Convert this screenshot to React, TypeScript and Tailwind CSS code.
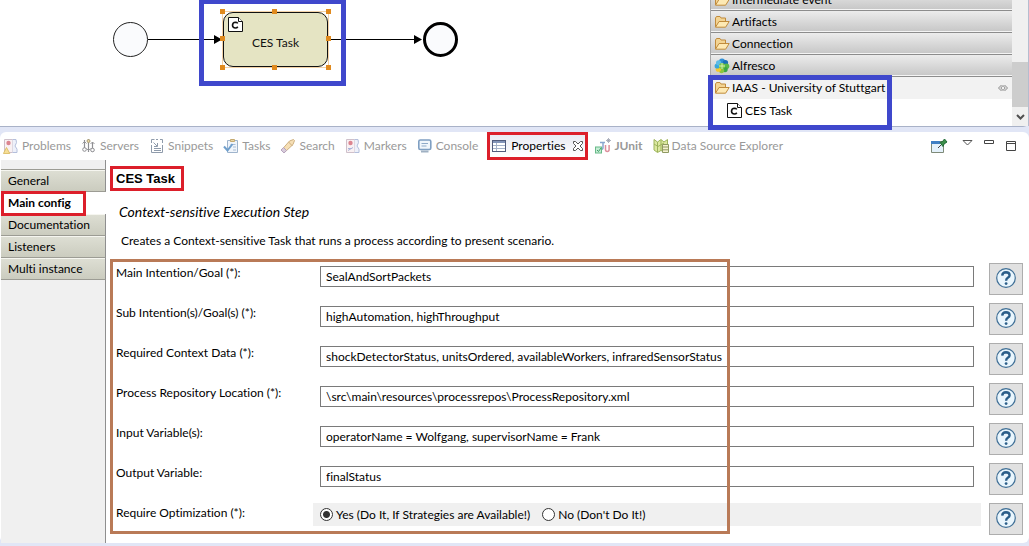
import type { ReactNode } from 'react';

const Folder = () => (
  <svg width="16" height="16" viewBox="0 0 16 16" className="shrink-0">
    <path d="M1.500 13V4l1-1.500h3.500l1 1.500h4.500V7" fill="#f3d493" stroke="#c08b3c" />
    <path d="M1.500 13.200L5 7.500h10.200l-3.600 5.700z" fill="#fde9b4" stroke="#c08b3c" strokeLinejoin="round" />
  </svg>
);

const Alfresco = () => (
  <svg width="16" height="16" viewBox="0 0 16 16" className="shrink-0">
    <circle cx="8" cy="3.600" r="3" fill="#2f8fd6" />
    <circle cx="11.400" cy="4.800" r="2.700" fill="#1c6fb8" />
    <circle cx="12.500" cy="8.200" r="2.800" fill="#58b947" />
    <circle cx="11" cy="11.600" r="2.700" fill="#3aa648" />
    <circle cx="7.600" cy="12.600" r="2.600" fill="#8ac53e" />
    <circle cx="4.300" cy="11.200" r="2.600" fill="#f5c82a" />
    <circle cx="3.200" cy="8" r="2.600" fill="#38a7dd" />
    <circle cx="4.600" cy="4.800" r="2.600" fill="#5cbce6" />
    <circle cx="8" cy="8" r="3" fill="#7cc84a" />
    <path d="M8 5v6M5 8h6" stroke="#e6f6c8" strokeWidth=".8" />
  </svg>
);

const ServiceIcon = () => (
  <svg width="17" height="17" viewBox="0 0 17 17" className="shrink-0">
    <path d="M1.500 1.500h10l4 4v10h-14z" fill="#fff" stroke="#111" />
    <path d="M11.500 1.500v4h4" fill="#fff" stroke="#111" />
    <path d="M10.800 7.400Q10 6.300 8.500 6.300 5.600 6.500 5.500 9.200 5.600 11.900 8.500 12q1.500 0 2.300-1.200" fill="none" stroke="#111" strokeWidth="1.600" />
  </svg>
);

const tabIcon = (body: ReactNode) => (
  <svg width="16" height="16" viewBox="0 0 16 16" fill="none" className="shrink-0">
    {body}
  </svg>
);

const markerBody = (
  <>
    <path d="M1.500 1.500h8v13h-8z" fill="#f9f1f3" stroke="#cfc0ca" />
    <path d="M9.500 1.500h3.500q1.500 3-1 6.500 3 3 2 6.500H9.500" fill="#eef1fa" stroke="#b4bfdc" />
    <circle cx="5.500" cy="5" r="2.200" fill="#dc8590" />
  </>
);

const icons = {
  problems: tabIcon(
    <>
      {markerBody}
      <path d="M3.500 9.500l3.300 6H.4z" fill="#f6df96" stroke="#d9b75a" strokeWidth=".8" />
    </>,
  ),
  servers: tabIcon(
    <>
      <path d="M3.500 2v9M7.500 1v13M11.500 4v10" stroke="#8e8e92" strokeWidth="1.200" />
      <path d="M1.500 5.500l2-2 2 2M5.500 10.500l2 2 2-2M9.500 6l2-2 2 2" stroke="#98989c" />
      <circle cx="3.500" cy="11.500" r="1.800" fill="#fff" stroke="#8e8e92" />
      <circle cx="7.500" cy="3" r="1.500" fill="#e9d6a0" stroke="#a89c78" />
      <circle cx="11.500" cy="12" r="1.800" fill="#fff" stroke="#8e8e92" />
    </>,
  ),
  snippets: tabIcon(
    <>
      <path d="M2.500 5V1.500h3M7 1.500h2M11 1.500h2.500V5M2.500 7v7.500h11V7" stroke="#8f9bab" />
      <path d="M4.500 4.500l3.500 3.500M8.500 5v3.500H5M5 10.500h7M5 12.500h7" stroke="#8f9bab" />
    </>,
  ),
  tasks: tabIcon(
    <>
      <path d="M4.500 2.500h10v12h-10z" fill="#f0f5fb" stroke="#9fb4cc" />
      <path d="M7.500 1.500h4v2h-4z" fill="#e8d6a8" stroke="#c5aa70" />
      <path d="M7.500 6.500h5M10 9h3M10 12h3" stroke="#a9bdd5" />
      <path d="M1 8.500l3.500 4L9.500 6" stroke="#6f9fcc" strokeWidth="2" />
    </>,
  ),
  search: tabIcon(
    <>
      <path d="M2 11.500L9.500 3l4-1.500 1 1-1.500 4L5 14z" fill="#f6dfb5" stroke="#ceb080" />
      <path d="M8.500 4l4 4" stroke="#ceb080" />
      <path d="M1 12l3 3 2.500-2.500-3-3z" fill="#d8ccdb" stroke="#b7a4bd" />
    </>,
  ),
  markers: tabIcon(
    <>
      {markerBody}
      <path d="M3 12.500l5-3M3 10.500h4" stroke="#a9b4da" />
    </>,
  ),
  console: tabIcon(
    <>
      <rect x="1.800" y="2" width="12" height="9.500" rx="1.500" fill="#f1f6fb" stroke="#7f9fc2" strokeWidth="1.600" />
      <path d="M4.500 5.500h6.500M4.500 8h5" stroke="#8faac8" />
      <path d="M4 13.500h7.500" stroke="#9fb0c2" strokeWidth="2" />
    </>,
  ),
  properties: tabIcon(
    <>
      <rect x="1.500" y="2.500" width="13" height="11" fill="#fff" stroke="#525c7c" />
      <path d="M2 4h12" stroke="#8294b8" strokeWidth="2" />
      <path d="M5.500 5v8M2 7.500h12M2 10.500h12" stroke="#a5b3ca" />
    </>,
  ),
  junit: tabIcon(
    <>
      <path d="M5 4.500h5M8 4.500v5q0 2-2 2" stroke="#88a7cf" strokeWidth="1.500" />
      <path d="M10.500 7v4.500q0 2 1.800 2t1.800-2V7" stroke="#dc8f9c" strokeWidth="1.500" />
      <path d="M13.500 0v5M11 2.500h5M12 1l3 3M15 1l-3 3" stroke="#9a9fae" strokeWidth=".8" />
      <rect x=".5" y="9" width="6" height="6" fill="#c5ecd5" stroke="#68ba88" />
      <path d="M2 12l1.500 1.500L6 10" stroke="#3fa066" />
    </>,
  ),
  data: tabIcon(
    <>
      <path d="M1 1.500l3.500 2.500L8 1.500 11 4l3.500-2.500V13L11 14l-3-1.500-3.500 2L1 12z" fill="#dce8a0" stroke="#9db45b" />
      <path d="M4.500 4v10M8 2v10.500M1 6l4 2.500L11 5" stroke="#9db45b" />
      <path d="M9.500 6.500h6v8h-6zM9.500 9h6M9.500 11.800h6" fill="#f4f1cf" stroke="#8f9a62" />
    </>,
  ),
};

const tabs: { name: string; icon: ReactNode; bold?: boolean }[] = [
  { name: 'Problems', icon: icons.problems },
  { name: 'Servers', icon: icons.servers },
  { name: 'Snippets', icon: icons.snippets },
  { name: 'Tasks', icon: icons.tasks },
  { name: 'Search', icon: icons.search },
  { name: 'Markers', icon: icons.markers },
  { name: 'Console', icon: icons.console },
  { name: 'Properties', icon: icons.properties },
  { name: 'JUnit', icon: icons.junit, bold: true },
  { name: 'Data Source Explorer', icon: icons.data },
];

const fields = [
  ['Main Intention/Goal (*):', 'SealAndSortPackets'],
  ['Sub Intention(s)/Goal(s) (*):', 'highAutomation, highThroughput'],
  ['Required Context Data (*):', 'shockDetectorStatus, unitsOrdered, availableWorkers, infraredSensorStatus'],
  ['Process Repository Location (*):', '\\src\\main\\resources\\processrepos\\ProcessRepository.xml'],
  ['Input Variable(s):', 'operatorName = Wolfgang, supervisorName = Frank'],
  ['Output Variable:', 'finalStatus'],
];

const handles = [
  '-left-[3px] -top-[3px]',
  'left-[49px] -top-[3px]',
  '-right-[3px] -top-[3px]',
  '-left-[3px] top-[24px]',
  '-right-[3px] top-[24px]',
  '-left-[3px] -bottom-[3px]',
  'left-[49px] -bottom-[3px]',
  '-right-[3px] -bottom-[3px]',
];

function Diagram() {
  return (
    <div className="relative min-w-0 flex-1 bg-white">
      <svg width="470" height="90" viewBox="0 0 470 90" className="absolute left-0 top-0">
        <circle cx="130.500" cy="39.500" r="17" fill="#fafbfd" stroke="#222" />
        <path d="M148 39.500h68M328 39.500h90" stroke="#000" />
        <path d="M214 35l8 4.500-8 4.500zM414 35l8 4.500-8 4.500z" fill="#000" />
        <circle cx="440.500" cy="39.500" r="16" fill="#fafbfd" stroke="#000" strokeWidth="3" />
      </svg>
      <div className="absolute left-[199px] -top-px h-[87px] w-[147px] border-5 border-[#3f48cc]" />
      <div className="absolute left-[223px] top-[12px] h-[55px] w-[105px] outline outline-[#f3d3a8]">
        <div className="flex h-full items-center justify-center rounded-[10px] border border-[#111] bg-[#e5e4c3] pt-[7px] text-[#111]">
          CES Task
        </div>
        <div className="absolute left-[4px] top-[4px]">
          <ServiceIcon />
        </div>
        {handles.map((place) => (
          <span key={place} className={`absolute size-[5px] bg-[#e08a1e] ${place}`} />
        ))}
      </div>
    </div>
  );
}

function PaletteRow({ icon, name }: { icon: ReactNode; name: string }) {
  return (
    <button className="flex h-[22px] w-full shrink-0 items-center gap-[2px] border-b border-[#8c8c8c] bg-gradient-to-b from-[#ececec] to-[#c6c6c6] pl-[3px] text-left shadow-[inset_0_-1px_0_#f4f4f4]">
      {icon}
      {name}
    </button>
  );
}

function Palette() {
  return (
    <div className="relative flex w-[319px] shrink-0 border-r border-[#b5bccf]">
      <div className="flex flex-1 flex-col justify-end overflow-hidden border-l border-[#a8a8a8]">
        <PaletteRow icon={<Folder />} name="Intermediate event" />
        <PaletteRow icon={<Folder />} name="Artifacts" />
        <PaletteRow icon={<Folder />} name="Connection" />
        <PaletteRow icon={<Alfresco />} name="Alfresco" />
        <button className="flex h-[22px] shrink-0 items-center gap-[2px] bg-[#f2f2f2] pl-[3px] pr-[3px] text-left">
          <Folder />
          <span className="flex-1">IAAS - University of Stuttgart</span>
          <svg width="12" height="10" viewBox="0 0 12 10" fill="none" stroke="#888">
            <path d="M4.500 2L1.500 5l3 3M7.500 2l3 3-3 3M6 2.500L3.800 5 6 7.500 8.200 5z" />
          </svg>
        </button>
        <button className="flex h-[27px] shrink-0 items-center gap-[2px] bg-white pb-[4px] pl-[15px] text-left">
          <ServiceIcon />
          CES Task
        </button>
      </div>
      <div className="flex w-[16px] flex-col bg-[#f0f0f0]">
        <div className="mt-[62px] h-[45px] bg-[#cdcdcd]" />
        <div className="flex flex-1 items-center justify-center">
          <svg width="9" height="6" viewBox="0 0 9 6" fill="none" stroke="#505050" strokeWidth="2">
            <path d="M1 1l3.500 3.500L8 1" />
          </svg>
        </div>
      </div>
      <div className="absolute -left-[2px] top-[75px] z-10 h-[55px] w-[184px] border-5 border-[#3f48cc]" />
    </div>
  );
}

function TabBar() {
  return (
    <div className="flex h-[28px] items-center pl-[3px] pr-[12px] text-[#999]">
      <div role="tablist" className="flex min-w-0 flex-1 items-center gap-[10px] whitespace-nowrap">
        {tabs.map((tab) =>
          tab.name === 'Properties' ? (
            <div key={tab.name} className="-mr-[3px] -ml-px flex h-[28px] items-center gap-[7px] border-3 border-[#dc1f2a] bg-gradient-to-b from-[#e9ebf3] to-white px-px">
              <button role="tab" aria-selected="true" className="flex items-center gap-[4px] text-black">
                {tab.icon}
                {tab.name}
              </button>
              <button aria-label="Close">
                <svg width="12" height="12" viewBox="0 0 12 12" fill="#fff" stroke="#555">
                  <path d="M1.500 1.500h2L6 4l2.500-2.500h2v2L8 6l2.500 2.500v2h-2L6 8l-2.500 2.500h-2v-2L4 6 1.500 3.500z" />
                </svg>
              </button>
            </div>
          ) : (
            <button key={tab.name} role="tab" aria-selected="false" className="flex items-center gap-[3px]">
              {tab.icon}
              <span className={tab.bold ? 'font-bold' : ''}>{tab.name}</span>
            </button>
          ),
        )}
      </div>
      <div className="flex items-center gap-[11px]">
        <button aria-label="Pin view" className="mr-[3px]">
          <svg width="18" height="16" viewBox="0 0 18 16">
            <path d="M1.500 3.500h12v11h-12z" fill="#e4f1fb" stroke="#7e8a78" />
            <path d="M1 3h9v3H1z" fill="#3f7fc4" />
            <path d="M8 10l4-4" stroke="#444" />
            <path d="M10 4.500l3 4 1-2.500 3-2-2.500-3-2 2.500z" fill="#3c8f4a" stroke="#1f6a36" />
          </svg>
        </button>
        <button aria-label="View menu" className="pb-[4px]">
          <svg width="11" height="10" viewBox="0 0 11 10" fill="#fff" stroke="#555">
            <path d="M1 1.500h9L5.500 6z" />
          </svg>
        </button>
        <button aria-label="Minimize" className="pb-[4px]">
          <svg width="10" height="10" viewBox="0 0 10 10" fill="#fff" stroke="#444">
            <path d="M.5 1.500h9v3h-9z" />
          </svg>
        </button>
        <button aria-label="Maximize">
          <svg width="12" height="12" viewBox="0 0 12 12" fill="#fff" stroke="#444">
            <path d="M1.500 1.500h9v9h-9zM1.500 3.500h9" />
          </svg>
        </button>
      </div>
    </div>
  );
}

const sideTab =
  'h-[22px] border-r border-b border-r-[#8f8f8f] border-b-[#9c9c94] bg-gradient-to-b from-[#dedfd4] to-[#cbccbf] pl-[7px] text-left shadow-[inset_0_1px_0_#f6f6f0]';

function SideNav() {
  return (
    <nav className="ml-px flex w-[105px] shrink-0 flex-col bg-[#f0f0f0]">
      <div className="h-[10px] border-r border-b border-r-[#8f8f8f] border-b-[#9c9c94]" />
      <button className={sideTab}>General</button>
      <div className="relative bg-white">
        <button className="h-[22px] w-full pl-[7px] text-left font-bold">Main config</button>
        <div className="pointer-events-none absolute left-0 -top-px h-[25px] w-[85px] border-3 border-[#dc1f2a]" />
      </div>
      <button className={sideTab}>Documentation</button>
      <button className={sideTab}>Listeners</button>
      <button className={sideTab}>Multi instance</button>
      <div className="flex-1 border-r border-[#8f8f8f]" />
    </nav>
  );
}

function HelpButton({ label }: { label: string }) {
  return (
    <button aria-label={`Help: ${label}`} className="flex h-[32px] w-[34px] items-center justify-center border border-[#adadad] bg-[#e1e1e1] pb-[2px]">
      <svg width="20" height="20" viewBox="0 0 20 20" fill="none">
        <circle cx="10" cy="10" r="9.300" fill="#eaf6fd" stroke="#3f6f96" strokeWidth="1.200" />
        <path d="M6.200 7.600Q6.500 4.400 10 4.300q3.500.1 3.600 2.900 0 1.500-1.800 2.600-1.700 1.100-1.700 3" stroke="#2c5f8a" strokeWidth="2.400" />
        <circle cx="10.100" cy="15.600" r="1.400" fill="#2c5f8a" />
      </svg>
    </button>
  );
}

const row = 'grid h-[40px] grid-cols-[197px_1fr_34px] items-start';

function ConfigForm() {
  return (
    <form className="relative pt-[4px] pr-[6px] pl-[6px]">
      {fields.map(([label, value], i) => (
        <div key={label} className={row}>
          <label htmlFor={`field-${i}`} className="pt-[2px]">
            {label}
          </label>
          <div className="mt-[3px] mr-[15px] ml-[7px]">
            <input id={`field-${i}`} defaultValue={value} className="block h-[21px] w-full border border-[#7a7a7a] bg-white px-[5px] outline-none" />
          </div>
          <HelpButton label={label} />
        </div>
      ))}
      <div className={row} role="radiogroup" aria-label="Require Optimization">
        <span className="pt-[2px]">Require Optimization (*):</span>
        <div className="mr-[8px] flex h-[23px] items-center gap-[12px] bg-[#f0f0f0] pl-[7px]">
          {['Yes (Do It, If Strategies are Available!)', "No (Don't Do It!)"].map((text, i) => (
            <label key={text} className="flex items-center gap-[3px]">
              <input
                type="radio"
                name="optimize"
                defaultChecked={i === 0}
                className="size-[13px] appearance-none rounded-full border border-[#333] bg-white checked:bg-[radial-gradient(circle,#333_0_3px,#fff_4px)]"
              />
              {text}
            </label>
          ))}
        </div>
        <HelpButton label="Require Optimization" />
      </div>
      <div className="pointer-events-none absolute left-0 top-0 h-[275px] w-[620px] border-3 border-[#b97a57]" />
    </form>
  );
}

export default function App() {
  return (
    <main className="flex min-h-screen flex-col bg-[#e1e6f6] font-['Lato','Noto_Sans',sans-serif] text-[12px] leading-[16px] text-black [font-variant-ligatures:none]">
      <section className="flex h-[127px] rounded-br-md border-b border-[#a9b2c8] bg-white">
        <Diagram />
        <Palette />
      </section>
      <section className="mt-[5px] mb-[3px] flex flex-1 flex-col rounded-t-md rounded-b-md bg-white">
        <TabBar />
        <div className="flex flex-1">
          <SideNav />
          <div className="min-w-0 flex-1 pt-[6px] pl-[4px]">
            <h1 className="flex h-[25px] w-[74px] items-center border-3 border-[#dc1f2a] pl-[3px] font-['Liberation_Sans',sans-serif] text-[13px] font-bold">
              CES Task
            </h1>
            <p className="mt-[13px] pl-[9px] text-[14px] italic">Context-sensitive Execution Step</p>
            <p className="mt-[13px] mb-[10px] pl-[11px]">Creates a Context-sensitive Task that runs a process according to present scenario.</p>
            <ConfigForm />
          </div>
        </div>
      </section>
    </main>
  );
}
